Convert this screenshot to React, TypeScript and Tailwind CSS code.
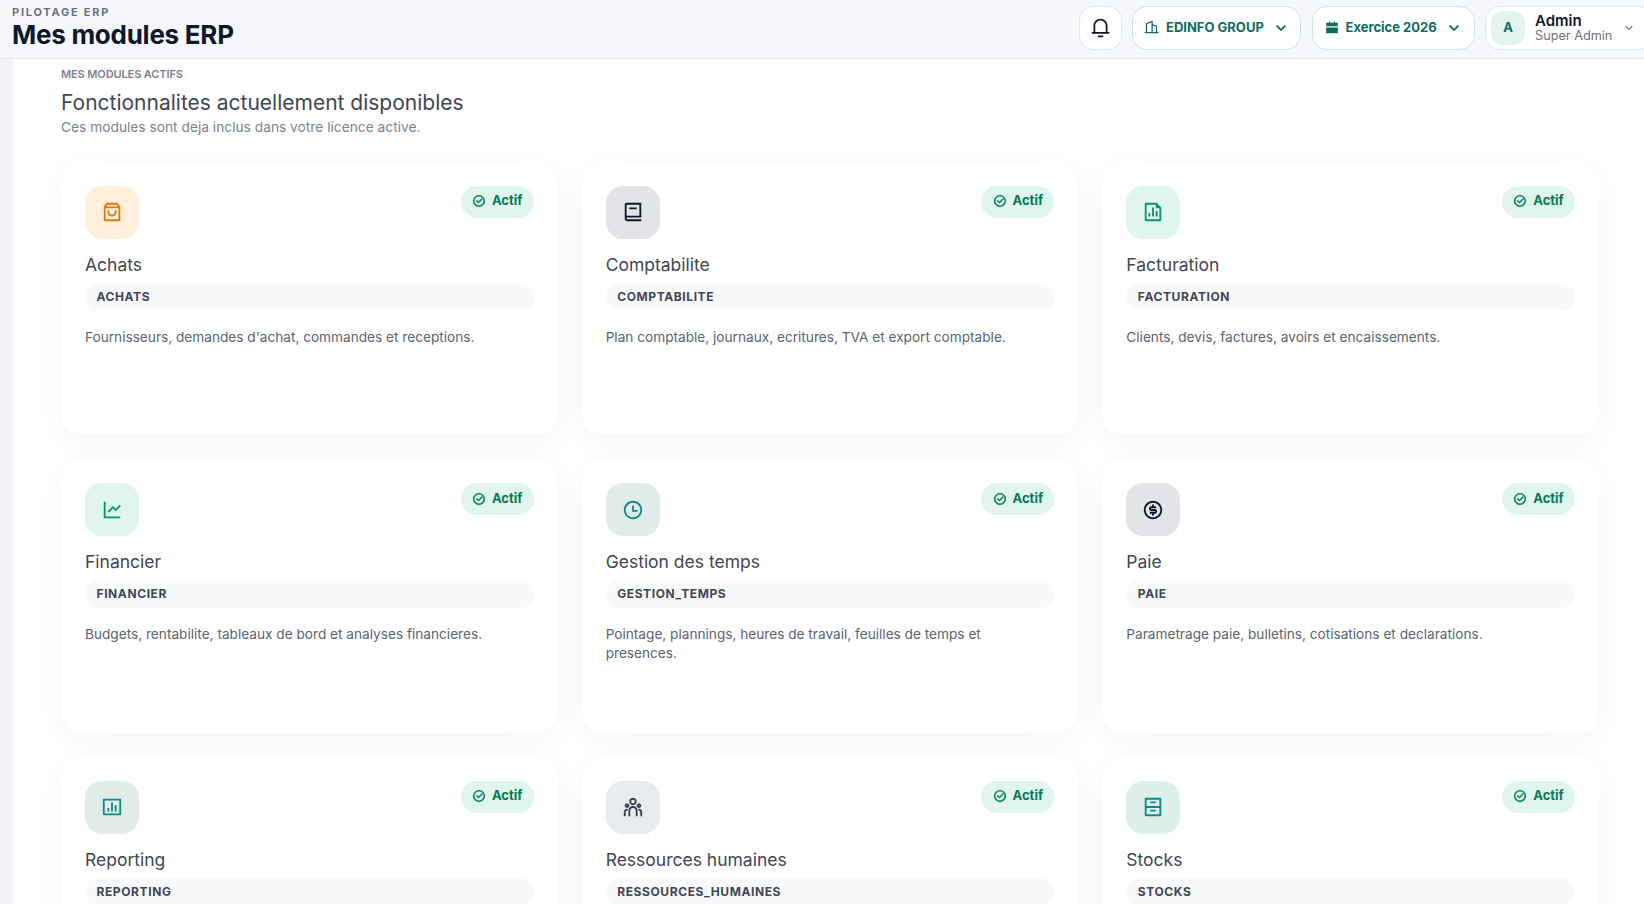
import * as React from "react"
import {
  RiArchiveDrawerLine,
  RiArrowDownSLine,
  RiBarChartBoxLine,
  RiBook2Line,
  RiBuilding2Line,
  RiCalendarFill,
  RiCheckboxCircleLine,
  RiFileChartLine,
  RiLineChartLine,
  RiMoneyDollarCircleLine,
  RiNotification3Line,
  RiShoppingBag3Line,
  RiTeamLine,
  RiTimeLine,
} from "react-icons/ri"

interface ModuleItem {
  name: string
  code: string
  text: string
  icon: React.ComponentType<{ className?: string }>
  tone: string
}

const modules: ModuleItem[] = [
  { name: "Achats", code: "ACHATS", text: "Fournisseurs, demandes d'achat, commandes et receptions.", icon: RiShoppingBag3Line, tone: "bg-[#ffefdc] text-[#e07b0a]" },
  { name: "Comptabilite", code: "COMPTABILITE", text: "Plan comptable, journaux, ecritures, TVA et export comptable.", icon: RiBook2Line, tone: "bg-[#e2e4e7] text-[#0f172a]" },
  { name: "Facturation", code: "FACTURATION", text: "Clients, devis, factures, avoirs et encaissements.", icon: RiFileChartLine, tone: "bg-[#e0f5ee] text-[#059669]" },
  { name: "Financier", code: "FINANCIER", text: "Budgets, rentabilite, tableaux de bord et analyses financieres.", icon: RiLineChartLine, tone: "bg-[#e0f5ee] text-[#059669]" },
  { name: "Gestion des temps", code: "GESTION_TEMPS", text: "Pointage, plannings, heures de travail, feuilles de temps et presences.", icon: RiTimeLine, tone: "bg-[#e1ecea] text-[#0f8a80]" },
  { name: "Paie", code: "PAIE", text: "Parametrage paie, bulletins, cotisations et declarations.", icon: RiMoneyDollarCircleLine, tone: "bg-[#e2e4e7] text-[#0f172a]" },
  { name: "Reporting", code: "REPORTING", text: "", icon: RiBarChartBoxLine, tone: "bg-[#e1ecea] text-[#0f8a80]" },
  { name: "Ressources humaines", code: "RESSOURCES_HUMAINES", text: "", icon: RiTeamLine, tone: "bg-[#e8ecee] text-[#334155]" },
  { name: "Stocks", code: "STOCKS", text: "", icon: RiArchiveDrawerLine, tone: "bg-[#dcefeb] text-[#0f8a80]" },
]

const ModuleCard = ({ item }: { item: ModuleItem }) => {
  const Glyph = item.icon
  return (
    <div className="rounded-[22px] bg-white p-6 shadow-[0_8px_32px_rgba(15,23,42,0.045)]">
      <div className="flex items-start justify-between">
        <div className={`flex h-[53px] w-[54px] items-center justify-center rounded-[17px] ${item.tone}`}>
          <Glyph className="h-[22px] w-[22px]" />
        </div>
        <span className="flex h-8 w-[73px] items-center justify-center gap-[6px] rounded-full bg-[#e0f5ee] pb-px text-[13px] font-bold text-[#067a55]">
          <RiCheckboxCircleLine className="h-[14px] w-[14px] stroke-[0.7]" />
          Actif
        </span>
      </div>
      <h3 className="mt-[14px] text-[17.5px] leading-[24px] font-normal text-[#3f4654]">{item.name}</h3>
      <div className="mt-[6px] flex h-7 items-center rounded-full bg-[#f8f9fb] pr-3 pl-[11.5px] text-[12px] font-bold tracking-[0.05em] text-[#3f4654]">
        {item.code}
      </div>
      <p className="mt-[17px] max-w-[410px] text-[13.65px] leading-[19px] text-[#5b6472]">{item.text}</p>
    </div>
  )
}

export default function App() {
  return (
    <div className="flex h-screen flex-col overflow-hidden bg-white font-['Inter',sans-serif]">
      {/* Top bar */}
      <header className="flex h-[59px] shrink-0 items-center justify-between overflow-hidden border-b border-[#e3e6ec] bg-[#f5f7fb] pb-[3px] pl-3">
        <div>
          <div className="text-[11px] leading-[13px] font-bold tracking-[0.16em] text-[#6b7280]">PILOTAGE ERP</div>
          <h1 className="mt-[1px] text-[26px] leading-[30px] font-bold tracking-[-0.01em] text-[#0f172a]">Mes modules ERP</h1>
        </div>
        <div className="-mr-[11px] flex shrink-0 items-center gap-[10.5px]">
          <button className="flex h-[44px] w-[43px] items-center justify-center rounded-[14px] border border-[#dde7ea] bg-white text-[#0f172a]">
            <RiNotification3Line className="h-[21px] w-[21px]" />
          </button>
          <button className="flex h-[44px] w-[169px] items-center rounded-[15px] border border-[#cfe3e0] bg-white pr-[10px] pl-[11px] text-[13px] font-bold text-[#0f6b61]">
            <RiBuilding2Line className="h-[15px] w-[15px]" />
            <span className="ml-[7px]">EDINFO GROUP</span>
            <RiArrowDownSLine className="ml-auto h-[18px] w-[18px] stroke-[0.7]" />
          </button>
          <button className="flex h-[44px] w-[163px] items-center rounded-[15px] border border-[#cfe3e0] bg-white pr-[11px] pl-[12px] text-[13px] font-bold text-[#0f6b61]">
            <RiCalendarFill className="h-[14px] w-[14px]" />
            <span className="ml-[7px]">Exercice 2026</span>
            <RiArrowDownSLine className="ml-auto h-[18px] w-[18px] stroke-[0.7]" />
          </button>
          <button className="flex h-[44px] w-[170px] items-center rounded-[15px] border border-[#dde7ea] bg-white pl-[5px]">
            <span className="flex h-[34px] w-[34px] items-center justify-center rounded-[12px] bg-[#e3f3ee] text-[13px] font-bold text-[#0f6b61]">A</span>
            <span className="ml-[10px] text-left">
              <span className="block text-[15px] leading-[15px] font-semibold text-[#0f172a]">Admin</span>
              <span className="block text-[12.7px] leading-[15px] text-[#6b7280]">Super Admin</span>
            </span>
            <RiArrowDownSLine className="ml-[10px] h-[14px] w-[14px] text-[#6b7280]" />
          </button>
        </div>
      </header>

      {/* Body */}
      <div className="flex min-h-0 flex-1 bg-[#f2f4f8]">
        <div className="w-[13px] shrink-0" />
        <main className="flex-1 overflow-hidden bg-white pt-[8px] pr-[45px] pl-[48px]">
          <div className="text-[11px] leading-[14px] font-semibold tracking-[-0.01em] text-[#7b8290]">MES MODULES ACTIFS</div>
          <h2 className="mt-[8px] text-[21px] leading-[28px] font-normal text-[#3f4654]">Fonctionnalites actuellement disponibles</h2>
          <p className="text-[13.75px] leading-[20px] text-[#7b8290]">Ces modules sont deja inclus dans votre licence active.</p>
          <div className="mt-[24.6px] grid grid-cols-3 auto-rows-[273.5px] gap-6">
            {modules.map((item) => (
              <ModuleCard key={item.code} item={item} />
            ))}
          </div>
        </main>
      </div>
    </div>
  )
}
